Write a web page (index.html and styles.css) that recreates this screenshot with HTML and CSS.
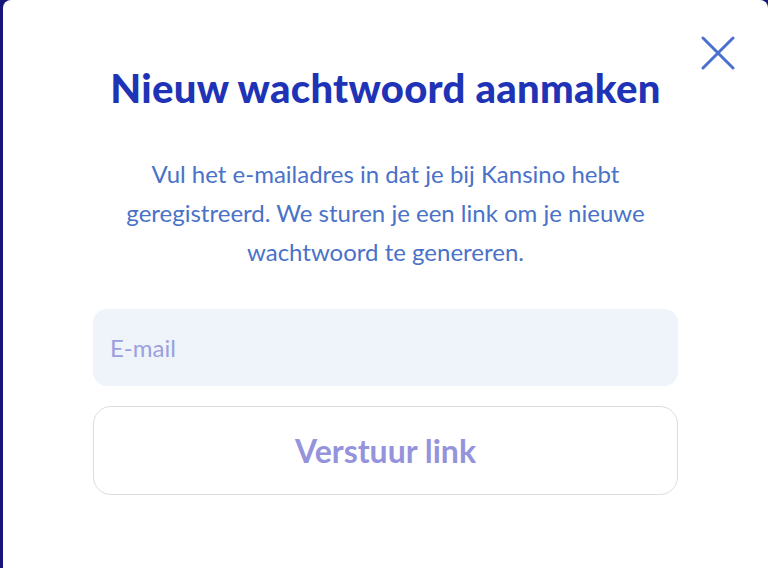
FILE: index.html
```html
<!DOCTYPE html>
<html lang="nl">
<head>
<meta charset="utf-8">
<title>Nieuw wachtwoord aanmaken</title>
<link rel="stylesheet" href="styles.css">
</head>
<body>
<div class="modal">
  <button class="close" aria-label="Sluiten">
    <svg width="34" height="34" viewBox="0 0 34 34"><path d="M2 2L32 32M32 2L2 32" stroke="#4a70cf" stroke-width="3" stroke-linecap="round" fill="none"/></svg>
  </button>
  <h1 class="title">Nieuw wachtwoord aanmaken</h1>
  <p class="intro">Vul het e-mailadres in dat je bij Kansino hebt geregistreerd. We sturen je een link om je nieuwe wachtwoord te genereren.</p>
  <form class="form">
    <input class="field" type="email" placeholder="E-mail">
    <button class="submit" type="button">Verstuur link</button>
  </form>
</div>
</body>
</html>
```
FILE: styles.css
```css
html, body {
  margin: 0;
  height: 100%;
}
body {
  background: #16167a;
  overflow: hidden;
}
.modal {
  position: relative;
  margin-left: 3px;
  height: 100%;
  background: #ffffff;
  border-radius: 8px 8px 0 0;
  padding: 64px 90px 0;
  box-sizing: border-box;
  display: flex;
  flex-direction: column;
  align-items: center;
  font-family: "Lato", "Noto Sans", sans-serif;
}
.close {
  position: absolute;
  top: 36px;
  right: 33px;
  width: 34px;
  height: 34px;
  padding: 0;
  border: 0;
  background: none;
  display: flex;
}
.title {
  margin: 0;
  font-size: 40px;
  font-weight: 900;
  color: #1e33b6;
  line-height: 48px;
  letter-spacing: 0.3px;
  text-align: center;
  white-space: nowrap;
}
.intro {
  margin: 42px 0 0;
  width: 550px;
  font-size: 24px;
  line-height: 39px;
  color: #4a72c8;
  text-align: center;
}
.form {
  margin-top: 38px;
  width: 100%;
  display: flex;
  flex-direction: column;
  gap: 20px;
}
.field {
  height: 77px;
  border: 0;
  border-radius: 14px;
  background: #eff4fa;
  padding: 0 17px;
  font-family: inherit;
  font-size: 24px;
  color: #333;
  box-sizing: border-box;
  outline: none;
}
.field::placeholder {
  color: #9aa0dd;
}
.submit {
  height: 89px;
  border: 1px solid #dddddd;
  border-radius: 18px;
  background: #ffffff;
  font-family: inherit;
  font-size: 32px;
  font-weight: 700;
  color: #9493dc;
}
```
